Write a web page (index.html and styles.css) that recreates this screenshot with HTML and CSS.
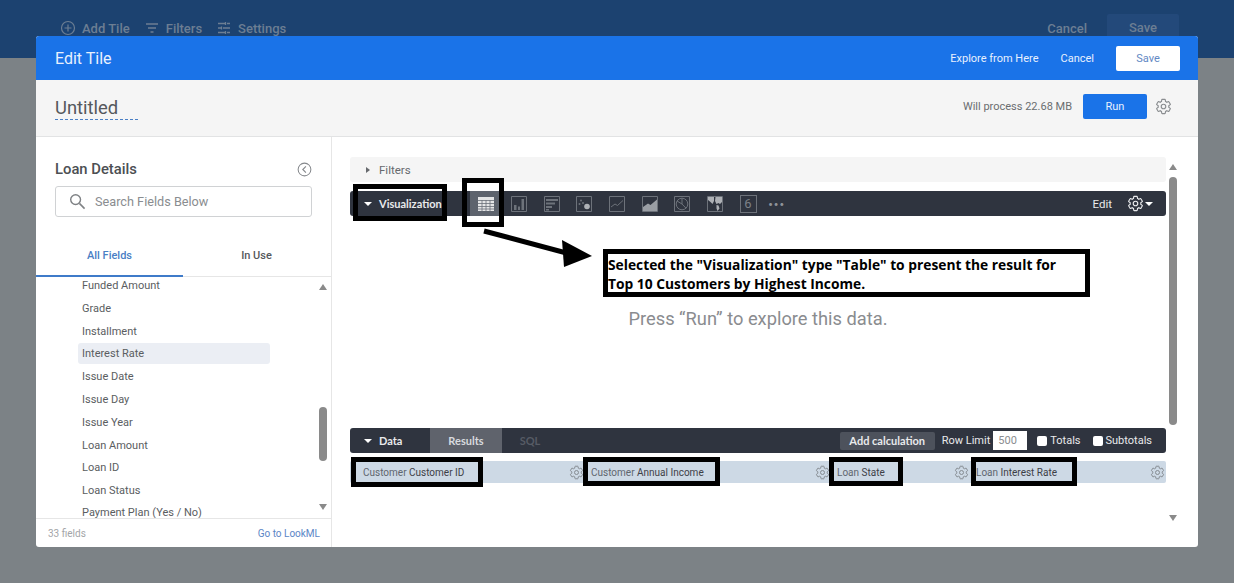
FILE: index.html
```html
<!DOCTYPE html>
<html lang="en">
<head>
  <meta charset="UTF-8" />
  <title>Edit Tile</title>
  <link rel="stylesheet" href="styles.css">
</head>
<body>

  <svg class="defs" width="0" height="0">
    <symbol id="gear" viewBox="0 0 24 24">
      <path fill="none" stroke="currentColor" stroke-width="1.6" d="M19.43 12.98c.04-.32.07-.64.07-.98s-.03-.66-.07-.98l2.11-1.65c.19-.15.24-.42.12-.64l-2-3.46c-.12-.22-.39-.3-.61-.22l-2.49 1c-.52-.4-1.08-.73-1.69-.98l-.38-2.65C14.46 2.18 14.25 2 14 2h-4c-.25 0-.46.18-.49.42l-.38 2.65c-.61.25-1.17.59-1.69.98l-2.49-1c-.23-.09-.49 0-.61.22l-2 3.46c-.13.22-.07.49.12.64l2.11 1.65c-.04.32-.07.65-.07.98s.03.66.07.98l-2.11 1.65c-.19.15-.24.42-.12.64l2 3.46c.12.22.39.3.61.22l2.49-1c.52.4 1.08.73 1.69.98l.38 2.65c.03.24.24.42.49.42h4c.25 0 .46-.18.49-.42l.38-2.65c.61-.25 1.17-.59 1.69-.98l2.49 1c.23.09.49 0 .61-.22l2-3.46c.12-.22.07-.49-.12-.64l-2.11-1.65z"/>
      <circle cx="12" cy="12" r="3.2" fill="none" stroke="currentColor" stroke-width="1.6"/>
    </symbol>
  </svg>

  <!-- dashboard behind the dialog -->
  <div class="topbar">
    <div class="topbar-left">
      <span class="top-item">
        <svg class="top-icon" viewBox="0 0 16 16"><circle cx="8" cy="8" r="6.5" fill="none" stroke="currentColor" stroke-width="1.2"/><path d="M8 4.5v7M4.5 8h7" stroke="currentColor" stroke-width="1.2"/></svg>
        Add Tile
      </span>
      <span class="top-item">
        <svg class="top-icon" viewBox="0 0 16 16"><path d="M2 4h12M4 8h8M6.500 12h3" stroke="currentColor" stroke-width="1.300"/></svg>
        Filters
      </span>
      <span class="top-item">
        <svg class="top-icon" viewBox="0 0 16 16"><path d="M2 3.500h7M11 3.500h3M2 8h3M7 8h7M2 12.500h7M11 12.500h3M9.500 2v3M5.500 6.500v3M9.500 11v3" stroke="currentColor" stroke-width="1.300"/></svg>
        Settings
      </span>
    </div>
    <div class="topbar-right">
      <span class="top-item">Cancel</span>
      <span class="top-save">Save</span>
    </div>
  </div>

  <div class="dialog">
    <div class="dialog-head">
      <div class="dialog-title">Edit Tile</div>
      <div class="head-actions">
        <span class="head-link">Explore from Here</span>
        <span class="head-link">Cancel</span>
        <button class="btn-save">Save</button>
      </div>
    </div>

    <div class="title-row">
      <div class="tile-name">Untitled</div>
      <div class="run-group">
        <span class="process">Will process 22.68 MB</span>
        <button class="btn-run">Run</button>
        <svg class="run-gear"><use href="#gear"/></svg>
      </div>
    </div>

    <div class="dialog-body">
      <div class="sidebar">
        <div class="side-top">
          <div class="side-title-row">
            <span class="side-title">Loan Details</span>
            <svg class="collapse" viewBox="0 0 16 16"><circle cx="8" cy="8" r="6.800" fill="none" stroke="currentColor" stroke-width="1.100"/><path d="M9.500 4.700 6.200 8l3.300 3.300" fill="none" stroke="currentColor" stroke-width="1.200"/></svg>
          </div>
          <div class="search">
            <svg class="search-icon" viewBox="0 0 18 18"><circle cx="7" cy="7" r="5.200" fill="none" stroke="currentColor" stroke-width="1.500"/><path d="M11 11l5.500 5.500" stroke="currentColor" stroke-width="1.700"/></svg>
            <span>Search Fields Below</span>
          </div>
        </div>
        <div class="tabs">
          <div class="tab tab-active">All Fields</div>
          <div class="tab">In Use</div>
        </div>
        <div class="fields">
          <ul class="field-list">
            <li>Funded Amount</li>
            <li>Grade</li>
            <li>Installment</li>
            <li class="field-hover">Interest Rate</li>
            <li>Issue Date</li>
            <li>Issue Day</li>
            <li>Issue Year</li>
            <li>Loan Amount</li>
            <li>Loan ID</li>
            <li>Loan Status</li>
            <li class="field-last">Payment Plan (Yes / No)</li>
          </ul>
          <div class="side-scroll">
            <span class="arrow-up"></span>
            <span class="side-thumb"></span>
            <span class="arrow-down"></span>
          </div>
        </div>
        <div class="side-foot">
          <span class="field-count">33 fields</span>
          <span class="lookml">Go to LookML</span>
        </div>
      </div>

      <div class="main">
        <div class="panels">
          <div class="filters-bar"><span class="caret-right"></span>Filters</div>

          <div class="dark-bar">
            <div class="bar-label"><span class="caret-down"></span>Visualization</div>
            <div class="vis-icons">
              <span class="vis-btn vis-btn-on">
                <svg viewBox="0 0 16 16"><path fill="#e4e5e6" d="M0 1h16v14H0z"/><path stroke="#6a7079" stroke-width=".8" d="M0 4.500h16M0 7.500h16M0 10.500h16M0 13h16M4 4v11M8 4v11M12 4v11"/></svg>
              </span>
              <span class="vis-btn">
                <svg viewBox="0 0 16 16"><path fill="none" stroke="currentColor" d="M.5.500h15v15H.5z"/><path fill="currentColor" d="M3 9h2.500v5H3zM7 10.500h2V14H7zM10.500 3H13v11h-2.500z"/></svg>
              </span>
              <span class="vis-btn">
                <svg viewBox="0 0 16 16"><path fill="none" stroke="currentColor" d="M.5.500h15v15H.5z"/><path fill="currentColor" d="M2 3h12v2H2zM2 6.500h9v2H2zM2 10h6v2H2zM2 13h3v1.500H2z"/></svg>
              </span>
              <span class="vis-btn">
                <svg viewBox="0 0 16 16"><path fill="none" stroke="currentColor" d="M.5.500h15v15H.5z"/><circle cx="5" cy="4.500" r="1" fill="currentColor"/><circle cx="3.500" cy="8" r="1" fill="currentColor"/><circle cx="11" cy="10.500" r="2.800" fill="#aeb1b6"/><circle cx="7" cy="7" r="1" fill="currentColor"/></svg>
              </span>
              <span class="vis-btn">
                <svg viewBox="0 0 16 16"><path fill="none" stroke="currentColor" d="M.5.500h15v15H.5z"/><path fill="none" stroke="currentColor" d="M2 11l4-3 2.500 1.500L14 4.500"/></svg>
              </span>
              <span class="vis-btn">
                <svg viewBox="0 0 16 16"><path fill="none" stroke="currentColor" d="M.5.500h15v15H.5z"/><path fill="#9a9ea4" d="M1 15v-4l5-3.500 2.500 1.500L15 3.500V15z"/></svg>
              </span>
              <span class="vis-btn">
                <svg viewBox="0 0 16 16"><path fill="none" stroke="currentColor" d="M.5.500h15v15H.5z"/><circle cx="8" cy="8" r="5.800" fill="none" stroke="currentColor"/><path fill="none" stroke="currentColor" d="M8 8V2.200M8 8l4 4.200M8 8 3 5"/></svg>
              </span>
              <span class="vis-btn">
                <svg viewBox="0 0 16 16"><path fill="none" stroke="currentColor" d="M.5.500h15v15H.5z"/><path fill="#aeb1b6" d="M1 1h6v4L5.500 8 3.500 6 1 4zM8.500 1H15v5l-2 2-1.500-1-2 1L8 5zM9.500 9l2 .5 1 3-2 2.500-1-2.500z"/></svg>
              </span>
              <span class="vis-btn vis-six">6</span>
              <span class="vis-dots">•••</span>
            </div>
            <div class="bar-right">
              <span class="bar-edit">Edit</span>
              <svg class="bar-gear"><use href="#gear"/></svg>
              <span class="caret-down caret-tight"></span>
            </div>
          </div>

          <div class="empty-note">Press “Run” to explore this data.</div>

          <div class="dark-bar">
            <div class="bar-label bar-label-data"><span class="caret-down"></span>Data</div>
            <div class="data-tab data-tab-on">Results</div>
            <div class="data-tab data-tab-sql">SQL</div>
            <div class="data-controls">
              <span class="add-calc">Add calculation</span>
              <span class="limit">Row Limit<span class="limit-input">500</span></span>
              <span class="check-label"><span class="check"></span>Totals</span>
              <span class="check-label"><span class="check"></span>Subtotals</span>
            </div>
          </div>

          <div class="field-heads">
            <div class="field-head"><span><i>Customer</i> Customer ID</span><svg><use href="#gear"/></svg></div>
            <div class="field-head"><span><i>Customer</i> Annual Income</span><svg><use href="#gear"/></svg></div>
            <div class="field-head"><span><i>Loan</i> State</span><svg><use href="#gear"/></svg></div>
            <div class="field-head"><span><i>Loan</i> Interest Rate</span><svg><use href="#gear"/></svg></div>
          </div>
        </div>

        <div class="main-scroll">
          <span class="arrow-up"></span>
          <span class="main-thumb"></span>
          <span class="arrow-down"></span>
        </div>
      </div>
    </div>
  </div>

  <!-- annotations drawn over the screenshot -->
  <div class="mark mark-vis"></div>
  <div class="mark mark-table"></div>
  <div class="mark mark-id"></div>
  <div class="mark mark-income"></div>
  <div class="mark mark-state"></div>
  <div class="mark mark-rate"></div>
  <svg class="callout-arrow" viewBox="0 0 130 50"><path d="M2 3 88 26" stroke="#000" stroke-width="5"/><path d="M110 28 80 12l2 27z" fill="#000"/></svg>
  <div class="callout">Selected the "Visualization" type "Table" to present the result for<br>Top 10 Customers by Highest Income.</div>

</body>
</html>
```

FILE: styles.css
```css
html, body {
  margin: 0;
  padding: 0;
  height: 583px;
  overflow: hidden;
  background: #7c8286;
  font-family: Roboto, sans-serif;
  color: #4a4d52;
}

.defs {
  display: block;
  height: 0;
}

button {
  font-family: inherit;
  border: none;
}

/* backdrop */
.topbar {
  height: 58px;
  box-sizing: border-box;
  padding: 14px 55px 0 60px;
  background: #1c4270;
  display: flex;
  justify-content: space-between;
  color: #6c7e93;
  font-size: 13px;
  font-weight: 500;
}

.topbar-left {
  display: flex;
  height: 28px;
  gap: 14px;
  align-items: center;
}

.topbar-right {
  display: flex;
  height: 28px;
  gap: 20px;
  align-items: center;
}

.top-item {
  display: flex;
  align-items: center;
  gap: 6px;
}

.top-icon {
  width: 16px;
  height: 16px;
}

.top-save {
  width: 72px;
  height: 22px;
  align-self: flex-start;
  line-height: 28px;
  text-align: center;
  background: #23497a;
  border-radius: 2px 2px 0 0;
}

/* dialog */
.dialog {
  position: absolute;
  left: 36px;
  top: 36px;
  width: 1162px;
  height: 511px;
  background: #fff;
  border-radius: 3px;
  display: flex;
  flex-direction: column;
  overflow: hidden;
}

.dialog-head {
  height: 44px;
  flex: none;
  background: #1a73e8;
  color: #fff;
  display: flex;
  align-items: center;
  justify-content: space-between;
  padding: 0 18px 0 19px;
}

.dialog-title {
  font-size: 16px;
  color: #e8f0fe;
}

.head-actions {
  display: flex;
  align-items: center;
  gap: 22px;
  font-size: 11px;
  color: #e8f0fe;
}

.btn-save {
  width: 64px;
  height: 25px;
  background: #fff;
  color: #6288c4;
  font-size: 11px;
  border-radius: 2px;
}

.title-row {
  height: 57px;
  flex: none;
  box-sizing: border-box;
  background: #f5f5f5;
  border-bottom: 1px solid #e2e3e4;
  display: flex;
  justify-content: space-between;
  align-items: center;
  padding: 0 26px 4px 19px;
}

.tile-name {
  width: 83px;
  font-size: 18.400px;
  line-height: 23px;
  color: #55585c;
  border-bottom: 1px dashed #4a7fc5;
  margin-top: 4px;
}

.run-group {
  display: flex;
  align-items: center;
  margin-top: 1px;
}

.process {
  font-size: 11px;
  color: #6a6d70;
  margin-right: 11px;
}

.btn-run {
  width: 64px;
  height: 25px;
  background: #1a73e8;
  color: #e8f0fe;
  font-size: 11px;
  border-radius: 2px;
}

.run-gear {
  width: 17px;
  height: 17px;
  margin-left: 8px;
  color: #8a8d90;
}

.dialog-body {
  flex: 1;
  min-height: 0;
  display: flex;
}

/* left column */
.sidebar {
  width: 296px;
  flex: none;
  box-sizing: border-box;
  border-right: 1px solid #e6e6e6;
  display: flex;
  flex-direction: column;
}

.side-top {
  height: 101px;
  flex: none;
  box-sizing: border-box;
  padding: 22px 19px 0 19px;
}

.side-title-row {
  display: flex;
  justify-content: space-between;
  align-items: center;
  height: 20px;
  margin-bottom: 7px;
}

.side-title {
  font-size: 14.800px;
  font-weight: 500;
  color: #4c4f53;
}

.collapse {
  width: 15px;
  height: 15px;
  color: #85888c;
}

.search {
  height: 31px;
  box-sizing: border-box;
  border: 1px solid #d0d2d4;
  border-radius: 3px;
  display: flex;
  align-items: center;
  padding-left: 13px;
  font-size: 12.700px;
  color: #8a8d90;
}

.search-icon {
  width: 17px;
  height: 17px;
  margin-right: 9px;
  color: #7f8285;
}

.tabs {
  height: 39px;
  flex: none;
  box-sizing: border-box;
  border-bottom: 1px solid #e6e6e6;
  display: flex;
}

.tab {
  width: 147px;
  line-height: 36px;
  text-align: center;
  font-size: 11px;
  font-weight: 500;
  color: #55585c;
}

.tab-active {
  color: #4a7fc5;
  height: 39px;
  box-sizing: border-box;
  border-bottom: 2px solid #3f7bc9;
}

.fields {
  flex: 1;
  min-height: 0;
  display: flex;
  justify-content: space-between;
  overflow: hidden;
}

.field-list {
  list-style: none;
  margin: 0;
  padding: 0 0 0 42px;
  width: 192px;
}

.field-list li {
  height: 22.800px;
  line-height: 18px;
  padding-left: 4px;
  font-size: 11px;
  color: #5a5d61;
  border-radius: 3px;
  white-space: nowrap;
}

.field-list .field-hover {
  background: #ebeef4;
  height: 21px;
  line-height: 21px;
  margin-top: -2.400px;
  margin-bottom: 4.200px;
}

.field-list .field-last {
  height: 13px;
  line-height: 15px;
}

.side-scroll {
  width: 12px;
  margin-right: 2px;
  display: flex;
  flex-direction: column;
  align-items: center;
  padding-top: 7px;
}

.side-thumb {
  width: 8px;
  height: 54px;
  margin-top: 117px;
  background: #8a8a8a;
  border-radius: 4px;
}

.side-scroll .arrow-down {
  margin-top: 43px;
}

.arrow-up,
.arrow-down {
  width: 0;
  height: 0;
  border-left: 4.500px solid transparent;
  border-right: 4.500px solid transparent;
}

.arrow-up {
  border-bottom: 6px solid #8a8a8a;
}

.arrow-down {
  border-top: 6px solid #8a8a8a;
}

.side-foot {
  height: 29px;
  flex: none;
  box-sizing: border-box;
  border-top: 1px solid #e6e6e6;
  display: flex;
  justify-content: space-between;
  align-items: center;
  padding: 0 11px 0 12px;
  font-size: 10px;
}

.field-count {
  color: #a3a5a8;
}

.lookml {
  color: #5b86c6;
}

/* right column */
.main {
  flex: 1;
  display: flex;
  padding: 20px 0 0 18px;
  min-width: 0;
}

.panels {
  width: 816px;
  flex: none;
  margin-bottom: 64px;
  display: flex;
  flex-direction: column;
}

.filters-bar {
  height: 25px;
  flex: none;
  margin-bottom: 9px;
  background: #f5f5f5;
  border-radius: 3px;
  display: flex;
  align-items: center;
  padding-left: 16px;
  font-size: 11.500px;
  color: #66696d;
}

.caret-right {
  width: 0;
  height: 0;
  border-top: 3.500px solid transparent;
  border-bottom: 3.500px solid transparent;
  border-left: 4px solid #66696d;
  margin-right: 9px;
}

.caret-down {
  width: 0;
  height: 0;
  border-left: 4px solid transparent;
  border-right: 4px solid transparent;
  border-top: 4px solid #fff;
  margin-right: 7px;
}

.dark-bar {
  height: 25px;
  flex: none;
  background: #2f343f;
  border-radius: 3px;
  display: flex;
  align-items: center;
  color: #e9eaec;
  font-family: Lato, sans-serif;
  font-size: 11px;
}

.bar-label {
  display: flex;
  align-items: center;
  width: 120px;
  padding-left: 14px;
  box-sizing: border-box;
  font-weight: 700;
}

.bar-label-data {
  width: 80px;
}

.vis-icons {
  display: flex;
  align-items: center;
  height: 100%;
  color: #6d727a;
}

.vis-btn {
  width: 32.700px;
  height: 100%;
  display: flex;
  align-items: center;
  justify-content: center;
}

.vis-btn svg {
  width: 16px;
  height: 16px;
}

.vis-btn-on {
  background: #5d636d;
}

.vis-six {
  font-size: 13px;
  font-family: Roboto, sans-serif;
  color: #7c8188;
  position: relative;
}

.vis-six::before {
  content: "";
  position: absolute;
  left: 8px;
  top: 4px;
  width: 15px;
  height: 16px;
  border: 1px solid #6d727a;
}

.vis-dots {
  font-size: 8px;
  letter-spacing: 1px;
  color: #8f9399;
  margin-left: 4px;
}

.bar-right {
  margin-left: auto;
  display: flex;
  align-items: center;
  padding-right: 7px;
  font-family: Roboto, sans-serif;
}

.bar-edit {
  font-size: 11.500px;
  margin-right: 15px;
}

.bar-gear {
  width: 17px;
  height: 17px;
  color: #e9eaec;
}

.caret-tight {
  margin: 0 6px 0 1px;
}

.empty-note {
  flex: 1;
  display: flex;
  align-items: center;
  justify-content: center;
  padding-bottom: 8px;
  font-size: 18.300px;
  color: #8a8c8f;
}

.data-tab {
  width: 72px;
  height: 100%;
  line-height: 25px;
  text-align: center;
  font-weight: 700;
  color: #565b65;
}

.data-tab-on {
  background: #5f636c;
  color: #d8dade;
}

.data-tab-sql {
  width: 56px;
}

.data-controls {
  margin-left: auto;
  display: flex;
  align-items: center;
  padding-right: 14px;
  font-family: Roboto, sans-serif;
  font-size: 11px;
}

.add-calc {
  width: 95px;
  height: 18px;
  line-height: 18px;
  text-align: center;
  background: #4d525c;
  border-radius: 2px;
  font-family: Lato, sans-serif;
  font-weight: 700;
  margin-right: 7px;
}

.limit {
  display: flex;
  align-items: center;
  margin-right: 10px;
}

.limit-input {
  width: 34px;
  height: 19px;
  box-sizing: border-box;
  margin-left: 3px;
  padding-left: 5px;
  line-height: 19px;
  background: #fff;
  color: #8a8d90;
}

.check-label {
  display: flex;
  align-items: center;
  margin-right: 12px;
}

.check-label:last-child {
  margin-right: 0;
}

.check {
  width: 10px;
  height: 10px;
  margin-right: 3px;
  background: #fff;
  border-radius: 2px;
}

.field-heads {
  height: 22px;
  flex: none;
  margin-top: 8px;
  box-sizing: border-box;
  padding: 0 1px 0 6px;
  background: #cdd9e5;
  border-radius: 2px;
  display: grid;
  grid-template-columns: 228px 246px 139px 196px;
}

.field-head {
  display: flex;
  justify-content: space-between;
  align-items: center;
  padding-left: 7px;
  font-size: 10px;
  color: #3d4047;
}

.field-head i {
  font-style: normal;
  color: #5f666e;
}

.field-head svg {
  width: 15px;
  height: 15px;
  color: #868c92;
}

.main-scroll {
  width: 12px;
  margin-left: 1px;
  display: flex;
  flex-direction: column;
  align-items: center;
  padding-top: 7px;
}

.main-thumb {
  width: 8px;
  height: 248px;
  margin-top: 7px;
  background: #8a8a8a;
  border-radius: 4px;
}

.main-scroll .arrow-down {
  margin-top: 90px;
}

/* annotations */
.mark {
  position: absolute;
  box-sizing: border-box;
  border: 5px solid #000;
}

.mark-vis {
  left: 353px;
  top: 184px;
  width: 94px;
  height: 37px;
}

.mark-table {
  left: 462px;
  top: 178px;
  width: 42px;
  height: 49px;
}

.mark-id {
  left: 351px;
  top: 457px;
  width: 132px;
  height: 30px;
}

.mark-income {
  left: 583px;
  top: 457px;
  width: 137px;
  height: 29px;
}

.mark-state {
  left: 829px;
  top: 457px;
  width: 74px;
  height: 29px;
}

.mark-rate {
  left: 971px;
  top: 457px;
  width: 106px;
  height: 29px;
}

.callout-arrow {
  position: absolute;
  left: 482px;
  top: 228px;
  width: 130px;
  height: 50px;
}

.callout {
  position: absolute;
  left: 603px;
  top: 249px;
  width: 487px;
  height: 48px;
  box-sizing: border-box;
  border: 5px solid #000;
  padding: 1px 0 0 0;
  background: #fff;
  color: #000;
  font-family: "Open Sans", sans-serif;
  font-weight: 700;
  font-size: 13.800px;
  line-height: 19px;
  white-space: nowrap;
}
```
